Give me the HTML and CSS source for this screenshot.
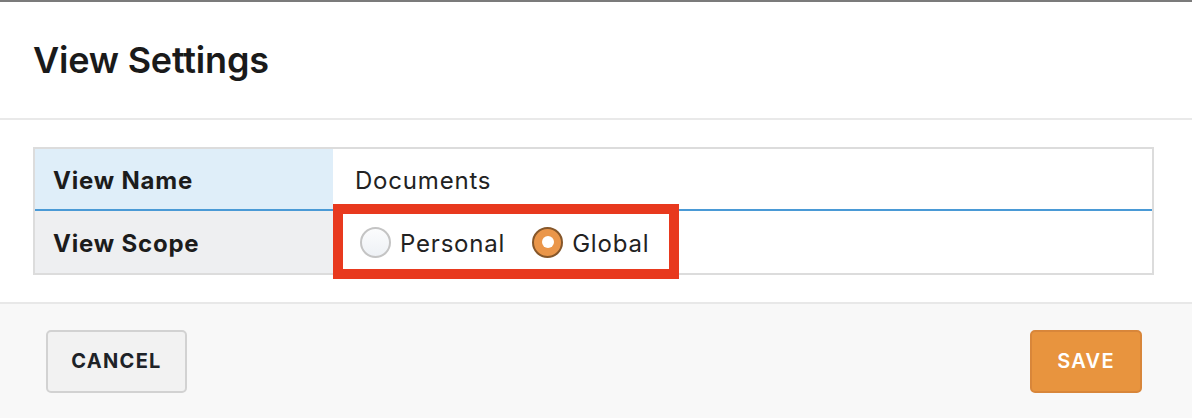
FILE: index.html
```html
<!DOCTYPE html>
<html>
<head>
<meta charset="utf-8">
<link rel="stylesheet" href="styles.css">
</head>
<body>
<div class="modal">
  <header class="modal-header">
    <h1 class="title">View Settings</h1>
  </header>
  <section class="modal-body">
    <div class="settings">
      <div class="row row-name">
        <div class="label">View Name</div>
        <div class="value">Documents</div>
      </div>
      <div class="row row-scope">
        <div class="label">View Scope</div>
        <div class="value radios">
          <label class="radio"><span class="dot"></span><span>Personal</span></label>
          <label class="radio checked"><span class="dot"></span><span>Global</span></label>
          <div class="highlight"></div>
        </div>
      </div>
    </div>
  </section>
  <footer class="modal-footer">
    <button class="btn btn-cancel">CANCEL</button>
    <button class="btn btn-save">SAVE</button>
  </footer>
</div>
</body>
</html>
```

FILE: styles.css
```css
* { box-sizing: border-box; }
html, body { margin: 0; padding: 0; }
body {
  font-family: Inter, "Liberation Sans", sans-serif;
  color: #1d1d1f;
  background: #fff;
  width: 1192px;
  height: 418px;
  overflow: hidden;
}
.modal {
  border-top: 2px solid #7b7b7b;
  display: flex;
  flex-direction: column;
  height: 418px;
}
.modal-header {
  height: 118px;
  display: flex;
  align-items: center;
  padding-left: 33px;
  border-bottom: 2px solid #e9e9e9;
}
.title {
  margin: 0;
  font-size: 36px;
  font-weight: 600;
  color: #1a1a1a;
  letter-spacing: -0.2px;
}
.modal-body {
  padding: 27px 38px 27px 33px;
}
.settings {
  border: 2px solid #dcdcdc;
}
.row {
  display: flex;
  height: 62px;
}
.row-name {
  border-bottom: 2px solid #4a9ad6;
}
.label {
  width: 298px;
  flex: none;
  display: flex;
  align-items: center;
  padding: 2px 0 0 18px;
  font-size: 24px;
  font-weight: 650;
  letter-spacing: 0.8px;
  color: #1c1c1c;
}
.row-name .label { background: #dfeef9; }
.row-scope .label { background: #eeeff1; }
.value {
  flex: 1;
  display: flex;
  align-items: center;
  padding: 2px 0 0 22px;
  font-size: 24px;
  letter-spacing: 0.8px;
  color: #222;
}
.radios {
  position: relative;
  padding-left: 27px;
  gap: 27px;
}
.radio {
  display: flex;
  align-items: center;
  gap: 9px;
}
.dot {
  width: 31px;
  height: 31px;
  margin-top: -2px;
  border-radius: 50%;
  border: 2px solid #c4c4c4;
  background: linear-gradient(#fbfcfd, #eef1f5);
  display: flex;
  align-items: center;
  justify-content: center;
}
.checked .dot {
  border-color: #86572a;
  background: #ea964a;
}
.checked .dot::after {
  content: "";
  width: 12px;
  height: 12px;
  border-radius: 50%;
  background: #fff;
}
.highlight {
  position: absolute;
  left: 0;
  top: -7px;
  width: 346px;
  height: 75px;
  border: 10px solid #e8391e;
  pointer-events: none;
}
.modal-footer {
  flex: 1;
  background: #f8f8f8;
  border-top: 2px solid #e8e8e8;
  display: flex;
  align-items: center;
  justify-content: space-between;
  padding: 0 50px 0 46px;
}
.btn {
  height: 63px;
  border-radius: 5px;
  font-family: Inter, "Liberation Sans", sans-serif;
  font-size: 20px;
  font-weight: 700;
  letter-spacing: 1.3px;
  padding: 0;
}
.btn-cancel {
  width: 141px;
  background: #f2f2f2;
  border: 2px solid #d2d2d2;
  color: #1e2328;
}
.btn-save {
  width: 112px;
  background: #e8943e;
  border: 2px solid #d8863a;
  color: #fff;
  font-weight: 600;
}
```
